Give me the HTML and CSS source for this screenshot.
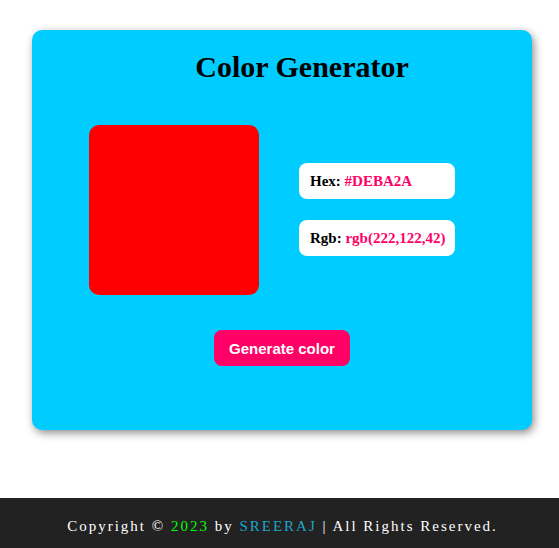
FILE: index.html
```
<!DOCTYPE html>
<html>
<head>
<meta charset="utf-8">
<link rel="stylesheet" href="styles.css">
</head>
<body>
<main class="page">
  <section class="card">
    <h1 class="title">Color Generator</h1>
    <div class="content">
      <div class="swatch"></div>
      <div class="info">
        <div class="info-box"><b>Hex:</b> <span class="value">#DEBA2A</span></div>
        <div class="info-box"><b>Rgb:</b> <span class="value">rgb(222,122,42)</span></div>
      </div>
    </div>
    <div class="actions">
      <button class="generate">Generate color</button>
    </div>
  </section>
</main>
<footer class="footer">
  <p class="footer-text">Copyright © <span class="year">2023</span> by <span class="author">SREERAJ</span> | All Rights Reserved.</p>
</footer>
</body>
</html>
```
FILE: styles.css
```
html, body {
  margin: 0;
  padding: 0;
}
body {
  font-family: "Liberation Serif", "Times New Roman", serif;
  background: #fff;
  min-height: 100vh;
  display: flex;
  flex-direction: column;
}
.page {
  flex: 1;
  padding: 30px 0 0 32px;
}
.card {
  width: 500px;
  height: 400px;
  box-sizing: border-box;
  background: #00ccff;
  border-radius: 10px;
  box-shadow: 2px 3px 8px rgba(0, 0, 0, 0.45);
  padding-top: 20px;
}
.title {
  margin: 0;
  font-size: 30px;
  font-weight: bold;
  text-align: center;
  padding-left: 40px;
  line-height: 34px;
  color: #000;
}
.content {
  display: flex;
  align-items: center;
  gap: 40px;
  padding-left: 57px;
  margin-top: 41px;
}
.swatch {
  width: 170px;
  height: 170px;
  background: #ff0000;
  border-radius: 10px;
}
.info {
  display: flex;
  flex-direction: column;
  gap: 21px;
  margin-top: -2px;
}
.info-box {
  width: 156px;
  height: 36px;
  box-sizing: border-box;
  background: #fff;
  border-radius: 8px;
  padding-left: 11px;
  line-height: 36px;
  font-size: 15px;
  font-weight: bold;
}
.value {
  color: #ff0066;
}
.actions {
  display: flex;
  justify-content: center;
  margin-top: 35px;
}
.generate {
  width: 136px;
  height: 36px;
  border: none;
  border-radius: 8px;
  background: #ff0066;
  color: #fff;
  font-family: "Liberation Sans", Arial, sans-serif;
  font-size: 15px;
  font-weight: bold;
  padding: 0;
  cursor: pointer;
}
.footer {
  height: 50px;
  background: #222;
  display: flex;
  align-items: center;
  justify-content: center;
  padding-left: 6px;
}
.footer-text {
  margin: 0;
  padding-top: 7px;
  color: #fff;
  font-size: 15px;
  letter-spacing: 2px;
}
.year {
  color: #00ff00;
}
.author {
  color: #1ea5c9;
}
```
